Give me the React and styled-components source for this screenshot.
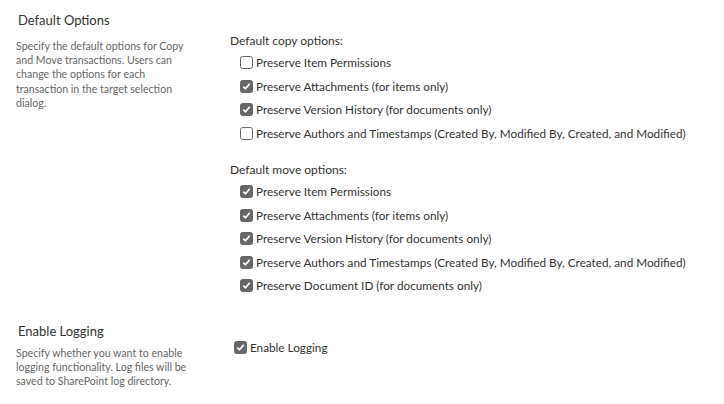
import React from 'react'
import styled, { createGlobalStyle } from 'styled-components'

const GlobalStyle = createGlobalStyle`
  body {
    margin: 0;
    background: #fff;
    font-family: Lato, "Noto Sans", sans-serif;
  }
`

const Page = styled.div`
  padding: 11px 0 0 16px;
  width: 724px;
  box-sizing: border-box;
`

const Section = styled.div`
  display: grid;
  grid-template-columns: 214px 1fr;
  margin-bottom: ${p => p.gap || 0}px;
`

const Info = styled.div`
  display: flex;
  flex-direction: column;
`

const Title = styled.div`
  font-size: 13px;
  line-height: 18px;
  color: #333;
  padding-left: 2px;
  margin-bottom: ${p => p.gap || 7}px;
`

const Desc = styled.div`
  font-size: 10.6px;
  line-height: 14.2px;
  color: #666;
  width: 180px;
`

const Options = styled.div`
  display: flex;
  flex-direction: column;
  padding-top: ${p => p.top || 0}px;
`

const Group = styled.div`
  display: flex;
  flex-direction: column;
  margin-bottom: ${p => p.gap || 0}px;
`

const GroupLabel = styled.div`
  font-size: 12px;
  line-height: 20px;
  color: #333;
`

const Row = styled.label`
  display: flex;
  align-items: center;
  gap: 3px;
  height: 23.5px;
  padding-left: ${p => p.indent ? 10 : 4}px;
  font-size: 11.75px;
  color: #333;
`

const Box = styled.span`
  width: 13px;
  height: 13px;
  box-sizing: border-box;
  border-radius: 2.5px;
  border: 1px solid #666;
  background: ${p => p.checked ? '#666' : '#fff'};
  display: inline-flex;
  align-items: center;
  justify-content: center;
  flex-shrink: 0;
`

function Check({ checked }) {
  return (
    <Box checked={checked}>
      {checked && (
        <svg width="9" height="9" viewBox="0 0 9 9">
          <path d="M1.3 4.7 L3.5 6.8 L7.7 1.8" fill="none" stroke="#fff" strokeWidth="1.7" />
        </svg>
      )}
    </Box>
  )
}

const copyOptions = [
  ['Preserve Item Permissions', false],
  ['Preserve Attachments (for items only)', true],
  ['Preserve Version History (for documents only)', true],
  ['Preserve Authors and Timestamps (Created By, Modified By, Created, and Modified)', false],
]

const moveOptions = [
  ['Preserve Item Permissions', true],
  ['Preserve Attachments (for items only)', true],
  ['Preserve Version History (for documents only)', true],
  ['Preserve Authors and Timestamps (Created By, Modified By, Created, and Modified)', true],
  ['Preserve Document ID (for documents only)', true],
]

export default function App() {
  return (
    <>
      <GlobalStyle />
      <Page>
        <Section gap={24}>
          <Info>
            <Title gap={10}>Default Options</Title>
            <Desc>
              Specify the default options for Copy and Move transactions. Users can change the
              options for each transaction in the target selection dialog.
            </Desc>
          </Info>
          <Options top={20}>
            <Group gap={15}>
              <GroupLabel>Default copy options:</GroupLabel>
              {copyOptions.map(([label, checked], i) => (
                <Row key={i} indent>
                  <Check checked={checked} />
                  {label}
                </Row>
              ))}
            </Group>
            <Group>
              <GroupLabel>Default move options:</GroupLabel>
              {moveOptions.map(([label, checked], i) => (
                <Row key={i} indent>
                  <Check checked={checked} />
                  {label}
                </Row>
              ))}
            </Group>
          </Options>
        </Section>
        <Section>
          <Info>
            <Title gap={6}>Enable Logging</Title>
            <Desc>
              Specify whether you want to enable logging functionality. Log files will be saved to
              SharePoint log directory.
            </Desc>
          </Info>
          <Options top={14}>
            <Row>
              <Check checked />
              Enable Logging
            </Row>
          </Options>
        </Section>
      </Page>
    </>
  )
}
